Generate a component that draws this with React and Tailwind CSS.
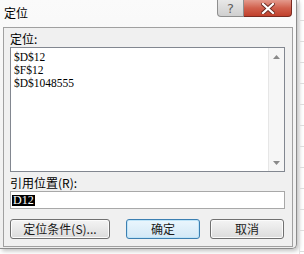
import React from "react";

const cjk = { fontFamily: '"Noto Sans CJK SC", "Noto Sans", sans-serif' };
const sim = { fontFamily: '"Liberation Serif", "Noto Sans CJK SC", serif' };

const DialogButton = ({ label, primary }) => (
  <div
    className={`h-[20px] flex items-center justify-center rounded-[3px] border text-[12px] text-[#1a1a1a] ${
      primary
        ? "border-[#3c7fb1] bg-gradient-to-b from-[#eaf6fd] to-[#d3e8f6] shadow-[inset_0_0_0_1px_#bfe4f8]"
        : "border-[#707070] bg-gradient-to-b from-[#f4f4f4] to-[#dcdcdc] shadow-[inset_0_0_0_1px_#fbfbfb]"
    }`}
    style={cjk}
  >
    {label}
  </div>
);

const ScrollArrow = ({ up }) => (
  <div className="h-[17px] flex items-center justify-center">
    <svg width="7" height="4" viewBox="0 0 7 4">
      <path d={up ? "M0 4 L3.5 0 L7 4 Z" : "M0 0 L3.5 4 L7 0 Z"} fill="#8a8a8a" />
    </svg>
  </div>
);

export default function App() {
  const items = ["$D$12", "$F$12", "$D$1048555"];

  return (
    <div className="w-[304px] h-[254px] bg-white relative overflow-hidden flex">
      {/* dialog window */}
      <div className="w-[297px] h-[249px] bg-gradient-to-b from-[#fafafa] to-[#eeeeee] border-r border-b border-[#8c8c8c] rounded-br-[5px] shadow-[2px_2px_4px_rgba(0,0,0,0.25)] flex flex-col">
        {/* title bar */}
        <div className="h-[27px] flex items-start">
          <div className="pl-[4px] pt-[5px] text-[12px] text-black leading-[16px]" style={cjk}>
            定位
          </div>
          <div className="ml-auto mr-[4px] flex">
            <div className="w-[27px] h-[17px] border border-t-0 border-[#8e8e8e] rounded-bl-[4px] bg-gradient-to-b from-[#e8e8e8] to-[#cfcfcf] flex items-center justify-center">
              <span className="text-[13px] leading-none text-[#5f5f5f]" style={{ fontFamily: '"DejaVu Sans", sans-serif' }}>
                ?
              </span>
            </div>
            <div className="w-[48px] h-[17px] border border-t-0 border-l-0 border-[#7a2a20] rounded-br-[4px] bg-gradient-to-b from-[#e39a8d] via-[#d1604d] to-[#c0402c] flex items-center justify-center">
              <svg width="14" height="11" viewBox="0 0 14 11">
                <path d="M2 1 L12 10 M12 1 L2 10" stroke="#6b2a22" strokeWidth="4" strokeLinecap="square" />
                <path d="M2 1 L12 10 M12 1 L2 10" stroke="#ffffff" strokeWidth="2.2" strokeLinecap="square" />
              </svg>
            </div>
          </div>
        </div>

        {/* client area */}
        <div className="ml-[3px] w-[290px] h-[220px] bg-[#f0f0f0] border border-[#a0a0a0] pl-[6px] pt-[3px] flex flex-col">
          <div className="h-[16px] text-[12px] leading-[16px] text-black" style={cjk}>
            定位:
          </div>
          <div className="w-[275px] h-[125px] bg-white border border-[#828790] flex">
            <div className="flex-1 pl-[3px] pt-[3px] text-[11.5px] leading-[13px] text-black" style={sim}>
              {items.map((item) => (
                <div key={item} className="h-[13px]">
                  {item}
                </div>
              ))}
            </div>
            <div className="w-[16px] bg-[#f6f6f6] border-l border-[#e6e6e6] flex flex-col justify-between">
              <ScrollArrow up />
              <ScrollArrow />
            </div>
          </div>
          <div className="mt-[3px] h-[16px] text-[12px] leading-[16px] text-black" style={cjk}>
            引用位置(R):
          </div>
          <div className="w-[275px] h-[18px] bg-white border border-[#a8a8a8] flex items-center pl-[1px]">
            <span className="bg-black text-white text-[12px] leading-[11px] px-[1px]" style={sim}>
              D12
            </span>
          </div>
          <div className="mt-[10px] flex">
            <div className="w-[100px]">
              <DialogButton label="定位条件(S)..." />
            </div>
            <div className="w-[74px] ml-[16px]">
              <DialogButton label="确定" primary />
            </div>
            <div className="w-[74px] ml-[10px]">
              <DialogButton label="取消" />
            </div>
          </div>
        </div>
      </div>

      {/* spreadsheet behind */}
      <div className="flex-1 flex flex-col border-l border-[#e2e2e2] ml-[2px]">
        {[0, 1, 2, 3, 4, 5, 6, 7, 8, 9, 10, 11].map((i) => (
          <div key={i} className="h-[21px] border-b border-[#dcdcdc]" />
        ))}
      </div>
    </div>
  );
}
